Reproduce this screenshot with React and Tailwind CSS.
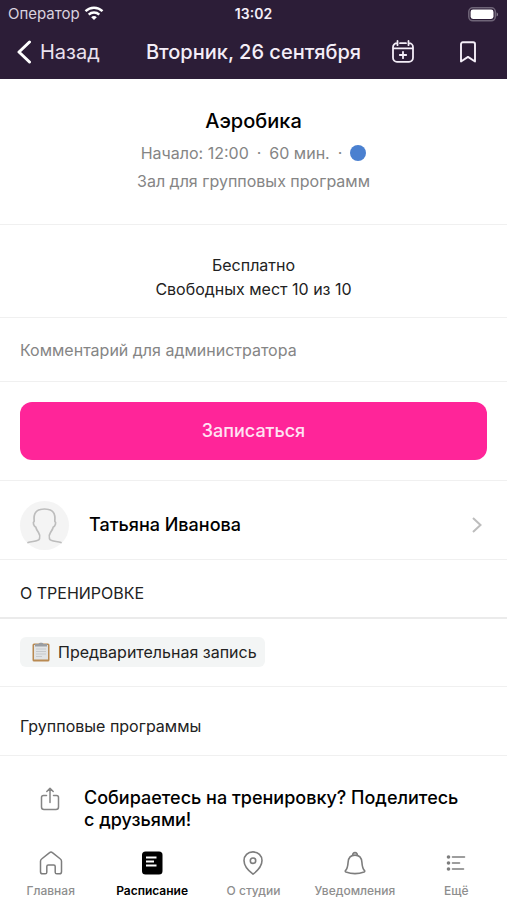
import { useState } from 'react';

const tabs = [
  { id: 'home', label: 'Главная', Icon: HomeIcon },
  { id: 'schedule', label: 'Расписание', Icon: ScheduleIcon },
  { id: 'studio', label: 'О студии', Icon: PinIcon },
  { id: 'notifications', label: 'Уведомления', Icon: BellIcon },
  { id: 'more', label: 'Ещё', Icon: MoreIcon },
];

function WifiIcon() {
  return (
    <svg width="20" height="15" viewBox="0 0 20 15" fill="none" stroke="#fff" strokeWidth="2.4" aria-hidden="true">
      <path d="M1.500 5.200C6.300.6 13.700.6 18.500 5.200" />
      <path d="M4.700 8.600c3-2.800 7.600-2.800 10.600 0" />
      <path d="M10 14 7.200 11.200c1.600-1.500 4-1.500 5.600 0z" fill="#fff" stroke="none" />
    </svg>
  );
}

function BatteryIcon() {
  return (
    <svg width="31" height="15" viewBox="0 0 31 15" aria-hidden="true">
      <rect x="0.800" y="0.800" width="26.500" height="13" rx="4" fill="none" stroke="#6f6578" strokeWidth="1.500" />
      <rect x="2.600" y="2.600" width="22.900" height="9.400" rx="2.400" fill="#fff" />
      <path d="M28.600 5.200c1.900.8 1.900 3.600 0 4.400z" fill="#8b8292" />
    </svg>
  );
}

function CalendarPlusIcon() {
  return (
    <svg width="24" height="24" viewBox="0 0 24 24" fill="none" stroke="#f4eef8" strokeWidth="1.800" strokeLinecap="round" aria-hidden="true">
      <path d="M6 3.200a4 4 0 0 0-4 4v10.600a4 4 0 0 0 4 4h12a4 4 0 0 0 4-4V7.200a4 4 0 0 0-4-4M9 3.200h6M2 8.300h20M6.500 1v4.200M17.500 1v4.200M12 11.800v6.400M8.800 15h6.400" />
    </svg>
  );
}

function BookmarkIcon() {
  return (
    <svg width="18" height="22" viewBox="0 0 18 22" fill="none" stroke="#f4eef8" strokeWidth="1.900" strokeLinejoin="round" aria-hidden="true">
      <path d="M2 3.200C2 2 2.700 1.300 3.800 1.300h10.400c1.100 0 1.800.7 1.800 1.900V20.500l-7-4.600-7 4.600z" />
    </svg>
  );
}

function PersonIcon() {
  return (
    <svg width="49" height="49" viewBox="0 0 49 49" fill="none" stroke="#bdbdbd" strokeWidth="1.700" strokeLinecap="round" strokeLinejoin="round" aria-hidden="true">
      <path d="M8 41.500c4-1.500 10.500-.7 11.500-3.800.7-2.200.2-4.500-1-6.200-1.400-2-2.300-3.400-2.800-5.500-1.900-.8-3.300-4.500-1.500-5.800C13.200 12 16.500 8 24.500 8s11.300 4 10.300 12.200c1.800 1.300.4 5-1.500 5.800-.5 2.100-1.400 3.500-2.800 5.500-1.200 1.700-1.700 4-1 6.200 1 3.100 7.500 2.300 11.500 3.800" />
    </svg>
  );
}

function ClipboardIcon() {
  return (
    <svg width="18" height="20" viewBox="0 0 18 20" aria-hidden="true">
      <rect x="0.500" y="1.500" width="17" height="18" rx="1.500" fill="#b98a52" />
      <rect x="2" y="3" width="14" height="14.500" fill="#e1e4e6" />
      <path d="M4 7h10M4 9.500h10M4 12h10M4 14.500h6" stroke="#c6c9cc" strokeWidth="1" />
      <path d="M3 2h3.500c.3-1.600 4.700-1.600 5 0H15v2.500H3z" fill="#9a9da1" />
    </svg>
  );
}

function ShareIcon() {
  return (
    <svg width="20" height="24" viewBox="0 0 20 24" fill="none" stroke="#858585" strokeWidth="1.500" strokeLinecap="round" strokeLinejoin="round" aria-hidden="true">
      <path d="M6.500 8.500H3.500a2 2 0 0 0-2 2V20a2.500 2.500 0 0 0 2.500 2.500h12a2.500 2.500 0 0 0 2.500-2.500v-9.500a2 2 0 0 0-2-2h-3M10 15.500V1.500M6.800 4.500 10 1.300l3.200 3.200" />
    </svg>
  );
}

function HomeIcon() {
  return (
    <svg width="24" height="24" viewBox="0 0 24 24" fill="none" stroke="#7d7d7d" strokeWidth="1.500" strokeLinejoin="round" aria-hidden="true">
      <path d="M1.500 10.200c0-1 .4-1.700 1.100-2.200l8-6.400c.9-.8 1.900-.8 2.800 0l8 6.400c.7.500 1.100 1.200 1.100 2.200v10.500c0 1.400-.7 2.100-2.100 2.100h-2.600c-1 0-1.600-.6-1.600-1.600v-5.700c0-1-.5-1.500-1.500-1.500H9.300c-1 0-1.500.5-1.500 1.500v5.700c0 1-.6 1.600-1.600 1.600H3.600c-1.400 0-2.100-.7-2.100-2.100z" />
    </svg>
  );
}

function ScheduleIcon() {
  return (
    <svg width="24" height="24" viewBox="0 0 24 24" fill="none" aria-hidden="true">
      <rect x="2" y="0.500" width="20.500" height="23" rx="3.500" fill="#000" />
      <path d="M6 6.500h10.500M6 10.500h8M6 14.500h10.500" stroke="#fff" strokeWidth="1.800" />
    </svg>
  );
}

function PinIcon() {
  return (
    <svg width="24" height="24" viewBox="0 0 24 24" fill="none" stroke="#7d7d7d" strokeWidth="1.600" strokeLinejoin="round" aria-hidden="true">
      <path d="M12 .9c5.200 0 9 3.700 9 8.700 0 5.500-4.500 10.300-9 13.600-4.500-3.300-9-8.100-9-13.600C3 4.600 6.800.9 12 .9z" />
      <circle cx="12" cy="9.700" r="2.700" />
    </svg>
  );
}

function BellIcon() {
  return (
    <svg width="24" height="24" viewBox="0 0 24 24" fill="none" stroke="#7d7d7d" strokeWidth="1.600" strokeLinejoin="round" aria-hidden="true">
      <path d="M10 4.300C9.300 2.800 10.400 1.600 12 1.600s2.700 1.200 2 2.700M12 4.100c4.200 0 6.600 2.900 6.900 7.200.3 4.700.6 6.400 2.600 8.300.4.500.3 1.100-.4 1.400-5.700 2-12.500 2-18.200 0-.7-.3-.8-.9-.4-1.400 2-1.900 2.300-3.600 2.600-8.300.3-4.300 2.700-7.200 6.900-7.200z" />
    </svg>
  );
}

function MoreIcon() {
  return (
    <svg width="24" height="24" viewBox="0 0 24 24" fill="none" stroke="#7d7d7d" strokeWidth="1.600" strokeLinecap="round" aria-hidden="true">
      <path d="M8.500 6h12M8.500 12h7M8.500 18h11" />
      <g fill="#7d7d7d" stroke="none">
        <circle cx="4.500" cy="6" r="1.800" />
        <circle cx="4.500" cy="12" r="1.800" />
        <circle cx="4.500" cy="18" r="1.800" />
      </g>
    </svg>
  );
}

function Header() {
  return (
    <header className="bg-[#2c1d37] text-[#f4eef8]">
      <div className="grid h-7 grid-cols-3 items-center px-2 text-sm">
        <div className="flex items-center gap-1 text-[15px] text-[#d9d2df]">
          Оператор
          <WifiIcon />
        </div>
        <div className="text-center font-semibold">13:02</div>
        <div className="flex justify-end">
          <BatteryIcon />
        </div>
      </div>
      <div className="grid h-[51px] grid-cols-[1fr_auto_1fr] items-center px-4 pb-1 text-xl">
        <button type="button" className="flex items-center gap-2 text-[#e9e1ee]">
          <svg width="16" height="24" viewBox="0 0 16 24" fill="none" stroke="#fff" strokeWidth="3" strokeLinecap="round" strokeLinejoin="round" aria-hidden="true">
            <path d="M13.500 2 3 12l10.500 10" />
          </svg>
          Назад
        </button>
        <h1 className="text-center font-medium whitespace-nowrap">Вторник, 26 сентября</h1>
        <div className="flex items-center justify-end gap-11 pr-3.5">
          <button type="button" aria-label="Добавить в календарь"><CalendarPlusIcon /></button>
          <button type="button" aria-label="В закладки"><BookmarkIcon /></button>
        </div>
      </div>
    </header>
  );
}

function TabBar({ active, onChange }) {
  return (
    <nav className="grid grid-cols-5 bg-white pt-2 pb-px">
      {tabs.map(({ id, label, Icon }) => (
        <button key={id} type="button" onClick={() => onChange(id)}
          className={`flex flex-col items-center gap-2 text-xs
            ${active === id ? 'font-semibold text-black' : 'font-medium text-[#8e8e8e]'}`}>
          <Icon />
          {label}
        </button>
      ))}
    </nav>
  );
}

export default function App() {
  const [tab, setTab] = useState('schedule');
  const [comment, setComment] = useState('');

  return (
    <div className="flex min-h-screen flex-col bg-white font-[Inter,sans-serif] text-base text-[#222]">
      <Header />

      <main className="flex-1 divide-y divide-[#f0f0f0]">
        {/* Class summary */}
        <section className="px-5 pt-7 pb-[29px] text-center text-[#858585]">
          <h2 className="text-xl leading-7 font-medium text-black">Аэробика</h2>
          <p className="mt-1 flex items-center justify-center gap-2 leading-7">
            <span>Начало: 12:00</span>
            <span>·</span>
            <span>60 мин.</span>
            <span>·</span>
            <span className="size-4 rounded-full bg-[#4a80d0]"></span>
          </p>
          <p className="leading-7">Зал для групповых программ</p>
        </section>

        <section className="px-5 pt-7 pb-4 text-center leading-6">
          <p>Бесплатно</p>
          <p>Свободных мест 10 из 10</p>
        </section>

        <input type="text" value={comment} onChange={e => setComment(e.target.value)}
          aria-label="Комментарий для администратора" placeholder="Комментарий для администратора"
          className="block h-16 w-full px-5 outline-none placeholder:text-[#858585]" />

        <div className="px-5 py-5">
          <button type="button" className="h-[58px] w-full rounded-xl bg-[#ff2599] text-lg font-medium text-[#ffe3f3]">
            Записаться
          </button>
        </div>

        {/* Trainer */}
        <a href="#trainer" className="flex h-[79px] items-center px-5 pt-2.5">
          <span className="rounded-full bg-[#f4f4f4]"><PersonIcon /></span>
          <span className="ml-5 flex-1 text-lg font-medium text-black">Татьяна Иванова</span>
          <svg width="12" height="18" viewBox="0 0 12 18" fill="none" stroke="#bdbdbd" strokeWidth="2" className="mr-1" aria-hidden="true">
            <path d="m2 2 7.500 7L2 16" />
          </svg>
        </a>

        {/* About the class */}
        <section>
          <h3 className="border-b-2 border-[#ebebeb] px-5 pt-[21px] pb-3 leading-6">О ТРЕНИРОВКЕ</h3>
          <div className="flex px-5 pt-[18px] pb-[19px]">
            <span className="flex h-[30px] items-center gap-2 rounded-md bg-[#f3f5f5] pr-2 pl-3">
              <ClipboardIcon />
              Предварительная запись
            </span>
          </div>
        </section>

        <p className="px-5 pt-[27px] pb-[17px] leading-6">Групповые программы</p>

        <button type="button" className="flex w-full gap-6 px-10 pt-[31px] text-left text-lg leading-[22px] font-medium text-black">
          <ShareIcon />
          <span className="flex-1">Собираетесь на тренировку? Поделитесь с друзьями!</span>
        </button>
      </main>

      <TabBar active={tab} onChange={setTab} />
    </div>
  );
}
